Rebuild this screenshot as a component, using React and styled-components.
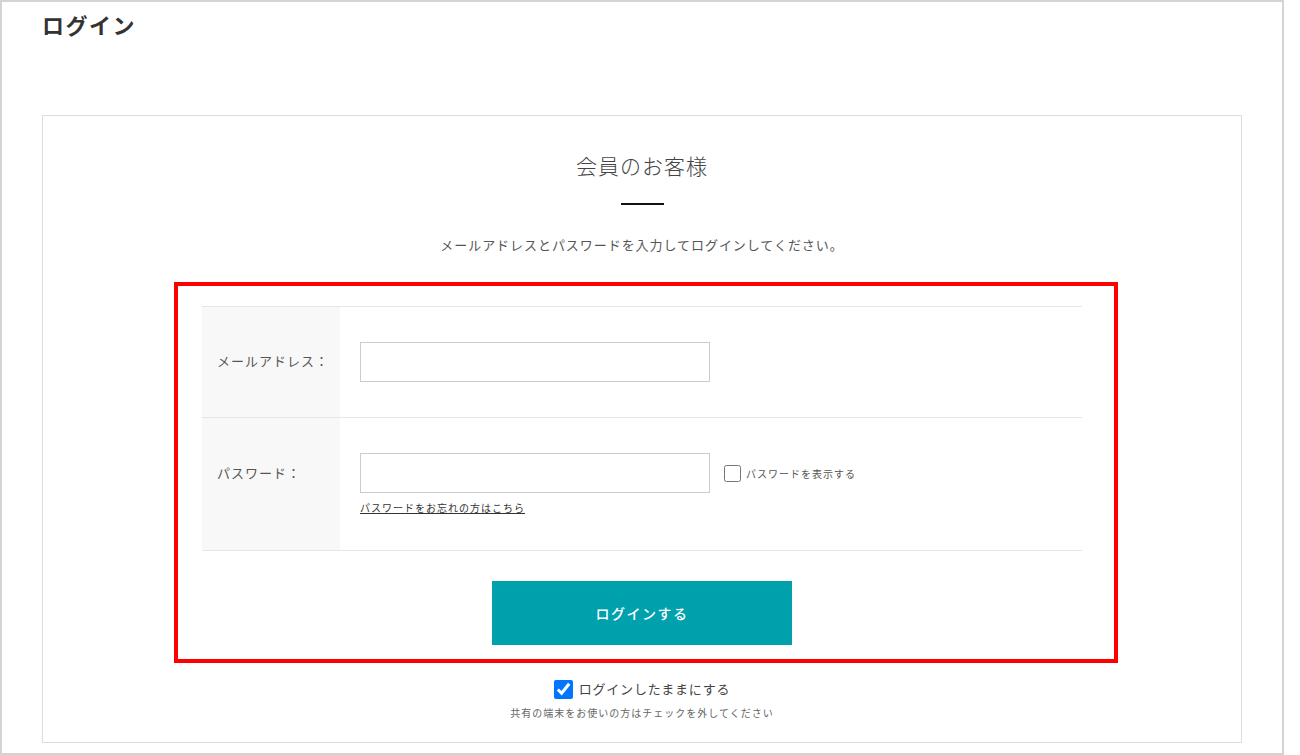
import React from 'react'
import styled, { createGlobalStyle } from 'styled-components'

const GlobalStyle = createGlobalStyle`
  html, body {
    margin: 0;
    padding: 0;
    background: #fff;
  }
  body {
    font-family: "Noto Sans CJK JP", "Noto Sans", sans-serif;
    color: #444;
  }
`

const Frame = styled.div`
  box-sizing: border-box;
  width: 1284px;
  height: 755px;
  border: 2px solid #d4d4d4;
  padding: 7px 40px 0 40px;
`

const PageTitle = styled.h1`
  margin: 0 0 76px 0;
  font-size: 22px;
  line-height: 30px;
  font-weight: bold;
  letter-spacing: 1.5px;
  color: #333;
`

const Card = styled.section`
  box-sizing: border-box;
  width: 1200px;
  height: 628px;
  border: 1px solid #dcdcdc;
  padding-top: 33px;
  display: flex;
  flex-direction: column;
  align-items: center;
`

const Heading = styled.h2`
  margin: 0;
  font-size: 21px;
  line-height: 32px;
  font-weight: 300;
  letter-spacing: 1px;
  color: #444;
`

const Rule = styled.span`
  display: block;
  width: 43px;
  height: 2px;
  background: #111;
  margin: 22px 0 30px;
`

const Lead = styled.p`
  margin: 0;
  font-size: 13px;
  line-height: 20px;
  letter-spacing: 0.95px;
  color: #555;
`

const Highlight = styled.div`
  box-sizing: border-box;
  align-self: flex-start;
  width: 944px;
  margin: 27px 0 0 131px;
  border: 4px solid #ff0000;
  padding: 20px 32px 14px 24px;
  display: flex;
  flex-direction: column;
  align-items: center;
`

const Table = styled.div`
  width: 880px;
  border-top: 1px solid #e6e6e6;
`

const Row = styled.div`
  display: flex;
  border-bottom: 1px solid #e6e6e6;
`

const Label = styled.div`
  box-sizing: border-box;
  width: 138px;
  flex-shrink: 0;
  background: #f8f8f8;
  padding: ${p => p.$top}px 0 0 15px;
  font-size: 13px;
  line-height: 18px;
  letter-spacing: 1px;
  white-space: nowrap;
  color: #555;
`

const Field = styled.div`
  padding: 35px 20px ${p => p.$bottom}px 20px;
`

const InputLine = styled.div`
  display: flex;
  align-items: center;
  gap: 14px;
`

const TextInput = styled.input`
  box-sizing: border-box;
  width: 350px;
  height: 40px;
  border: 1px solid #cccccc;
  border-radius: 0;
  padding: 0 10px;
  font-size: 14px;
  outline: none;
`

const ShowToggle = styled.label`
  display: flex;
  align-items: center;
  gap: 5px;
  font-size: 10px;
  letter-spacing: 1px;
  color: #555;
`

const SmallBox = styled.input`
  width: 17px;
  height: 17px;
  margin: 0;
`

const Forgot = styled.a`
  display: inline-block;
  margin-top: 2px;
  font-size: 10px;
  line-height: 16px;
  letter-spacing: 1px;
  color: #333;
  text-decoration: underline;
`

const Submit = styled.button`
  width: 300px;
  height: 64px;
  margin-top: 30px;
  border: none;
  background: #00a0ad;
  color: #fff;
  font-family: inherit;
  font-size: 14px;
  font-weight: 500;
  letter-spacing: 1.5px;
  cursor: pointer;
`

const Keep = styled.label`
  display: flex;
  align-items: center;
  gap: 6px;
  margin-top: 16px;
  font-size: 13px;
  line-height: 20px;
  letter-spacing: 0.8px;
  color: #444;
`

const KeepBox = styled.input`
  width: 19px;
  height: 19px;
  margin: 0;
  accent-color: #0075ff;
`

const Note = styled.p`
  margin: 6px 0 0;
  font-size: 10px;
  line-height: 16px;
  letter-spacing: 1px;
  color: #666;
`

export default function App() {
  return (
    <>
      <GlobalStyle />
      <Frame>
        <PageTitle>ログイン</PageTitle>
        <Card>
          <Heading>会員のお客様</Heading>
          <Rule />
          <Lead>メールアドレスとパスワードを入力してログインしてください。</Lead>
          <Highlight>
            <Table>
              <Row>
                <Label $top={45}>メールアドレス：</Label>
                <Field $bottom={35}>
                  <TextInput type="email" />
                </Field>
              </Row>
              <Row>
                <Label $top={46}>パスワード：</Label>
                <Field $bottom={33}>
                  <InputLine>
                    <TextInput type="password" />
                    <ShowToggle>
                      <SmallBox type="checkbox" />
                      パスワードを表示する
                    </ShowToggle>
                  </InputLine>
                  <Forgot href="#">パスワードをお忘れの方はこちら</Forgot>
                </Field>
              </Row>
            </Table>
            <Submit type="button">ログインする</Submit>
          </Highlight>
          <Keep>
            <KeepBox type="checkbox" defaultChecked />
            ログインしたままにする
          </Keep>
          <Note>共有の端末をお使いの方はチェックを外してください</Note>
        </Card>
      </Frame>
    </>
  )
}
